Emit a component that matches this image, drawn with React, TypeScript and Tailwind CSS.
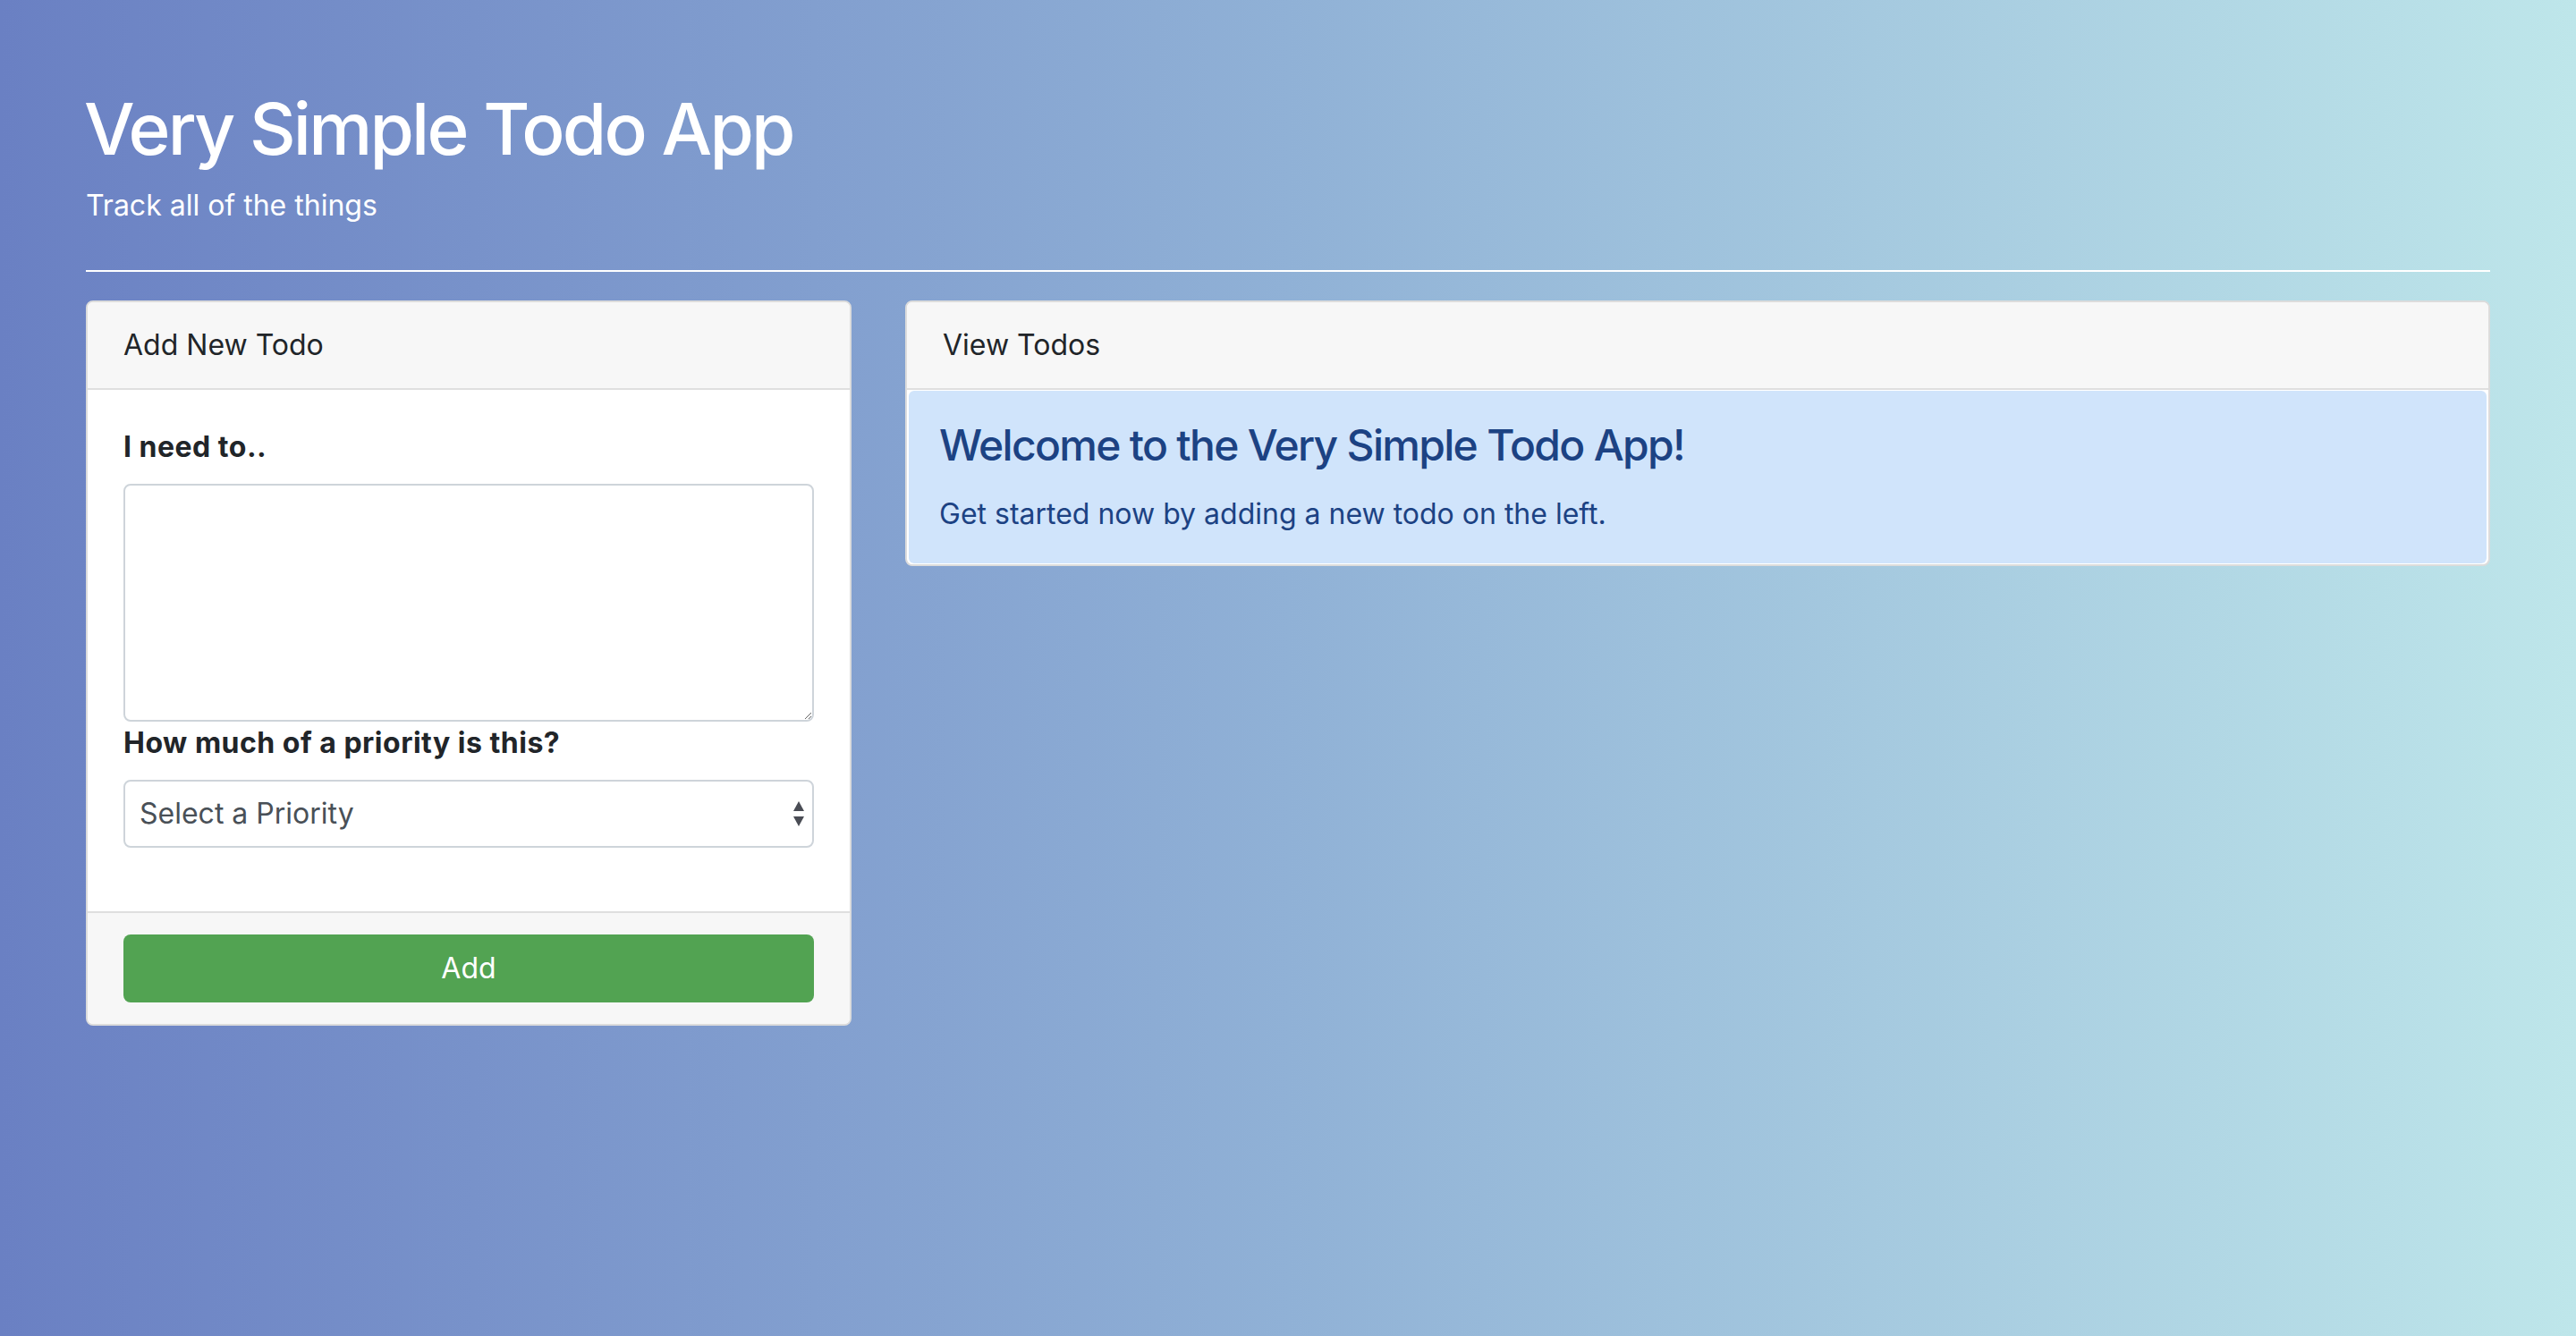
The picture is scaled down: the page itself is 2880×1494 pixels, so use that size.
import React from "react";

const font = { fontFamily: "Inter, 'Noto Sans', sans-serif" };

const SelectArrows: React.FC = () => (
  <svg
    className="pointer-events-none absolute right-[10px] top-1/2 -translate-y-1/2"
    width="14"
    height="30"
    viewBox="0 0 14 30"
  >
    <path d="M7 1 L13 12 L1 12 Z" fill="#4a4d55" />
    <path d="M1 18 L13 18 L7 29 Z" fill="#4a4d55" />
  </svg>
);

const AddTodoCard: React.FC = () => (
  <div className="w-[856px] shrink-0 rounded-lg border-2 border-[#dcdcdc] bg-white overflow-hidden">
    <div className="bg-[#f7f7f7] border-b-2 border-[#dfdfdf] px-[40px] py-[24px] text-[32px] leading-[48px] text-[#212529]">
      Add New Todo
    </div>
    <div className="px-[40px] pt-[40px] pb-[71px]">
      <label className="block mb-[17px] text-[32px] leading-[48px] font-bold tracking-[0.5px] text-[#212529]">
        I need to..
      </label>
      <textarea className="block w-full h-[266px] rounded-lg border-2 border-[#ced4da] bg-white outline-none" />
      <label className="block mb-[17px] text-[32px] leading-[48px] font-bold tracking-[0.5px] text-[#212529]">
        How much of a priority is this?
      </label>
      <div className="relative">
        <select
          defaultValue=""
          className="block w-full h-[76px] appearance-none rounded-lg border-2 border-[#ced4da] bg-white pl-[16px] text-[32px] text-[#495057] outline-none"
          style={font}
        >
          <option value="">Select a Priority</option>
          <option value="1">Low</option>
          <option value="2">Medium</option>
          <option value="3">High</option>
        </select>
        <SelectArrows />
      </div>
    </div>
    <div className="bg-[#f7f7f7] border-t-2 border-[#dfdfdf] px-[40px] py-[24px]">
      <button className="block w-full h-[76px] rounded-lg bg-[#52a352] text-[32px] text-white">
        Add
      </button>
    </div>
  </div>
);

const ViewTodosCard: React.FC = () => (
  <div className="flex-1 rounded-lg border-2 border-[#dcdcdc] bg-white overflow-hidden">
    <div className="bg-[#f7f7f7] border-b-2 border-[#dfdfdf] px-[40px] py-[24px] text-[32px] leading-[48px] text-[#212529]">
      View Todos
    </div>
    <div className="pt-[1px] px-[2px] pb-[1px]">
      <div className="rounded-md bg-[#d0e4fb] pl-[34px] pr-[34px] pt-[32px] pb-[31px] text-[#1c4283]">
        <h4 className="text-[48px] leading-[58px] font-medium tracking-[-1.7px]">
          Welcome to the Very Simple Todo App!
        </h4>
        <p className="mt-[24px] text-[32px] leading-[48px]">
          Get started now by adding a new todo on the left.
        </p>
      </div>
    </div>
  </div>
);

export default function App() {
  return (
    <div
      className="min-h-screen w-full bg-[linear-gradient(to_right,#6a80c3_0%,#90b1d6_50%,#bee6ea_100%)] px-[96px] pt-[96px] pb-[40px]"
      style={font}
    >
      <h1 className="-ml-[2px] text-[80px] leading-[96px] font-medium tracking-[-2.8px] text-white">
        Very Simple Todo App
      </h1>
      <p className="mt-[14px] text-[32px] leading-[48px] text-white">
        Track all of the things
      </p>
      <hr className="mt-[48px] border-0 h-[2px] bg-white" />
      <div className="mt-[32px] flex items-start gap-[60px]">
        <AddTodoCard />
        <ViewTodosCard />
      </div>
    </div>
  );
}
